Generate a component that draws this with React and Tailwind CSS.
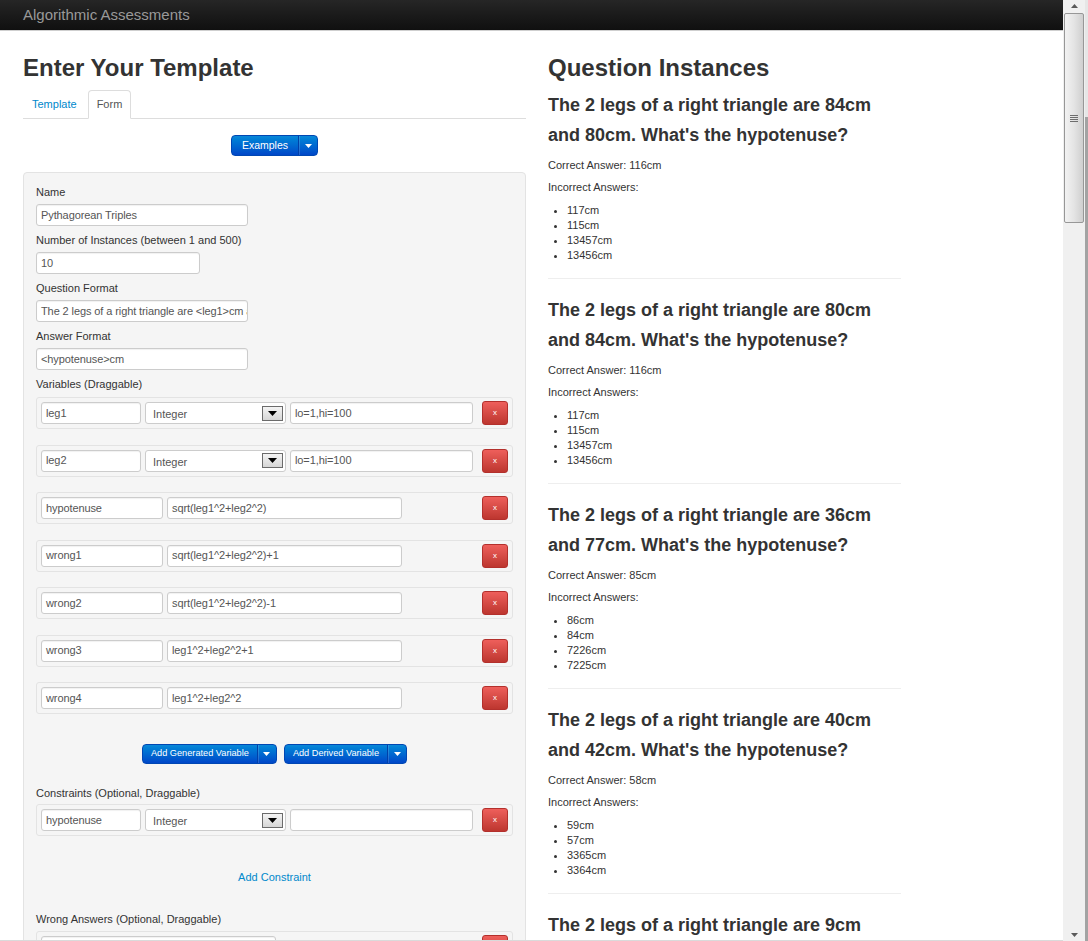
import React from "react";

const font = "font-['Liberation_Sans',Arial,sans-serif]";

const questions = [
  { legs: "84cm", other: "80cm", correct: "116cm", wrong: ["117cm", "115cm", "13457cm", "13456cm"] },
  { legs: "80cm", other: "84cm", correct: "116cm", wrong: ["117cm", "115cm", "13457cm", "13456cm"] },
  { legs: "36cm", other: "77cm", correct: "85cm", wrong: ["86cm", "84cm", "7226cm", "7225cm"] },
  { legs: "40cm", other: "42cm", correct: "58cm", wrong: ["59cm", "57cm", "3365cm", "3364cm"] },
  { legs: "9cm", other: "40cm", correct: "41cm", wrong: ["42cm", "40cm", "1682cm", "1681cm"] },
];

const Caret = () => (
  <svg width="7" height="4" viewBox="0 0 7 4">
    <path d="M0 0h7L3.5 4z" fill="#fff" />
  </svg>
);

const Input = ({ w, children }) => (
  <div
    className={`flex h-[22px] shrink-0 items-center overflow-hidden whitespace-nowrap rounded-[3px] border border-[#cccccc] bg-white pl-[4px] text-[11px] tracking-[-0.1px] text-[#555] shadow-[inset_0_1px_1px_rgba(0,0,0,0.06)] ${w}`}
  >
    {children}
  </div>
);

const Select = () => (
  <div className="flex h-[22px] w-[141px] shrink-0 items-center justify-between rounded-[3px] border border-[#cccccc] bg-white pl-[7px] pr-[2px] text-[11px] text-[#555]">
    <span className="pt-[3px]">Integer</span>
    <div className="flex h-[15px] w-[21px] items-center justify-center border border-[#6b6b6b] bg-linear-to-b from-[#f4f4f4] to-[#d6d6d6]">
      <svg width="9" height="5" viewBox="0 0 9 5">
        <path d="M0 0h9L4.5 5z" fill="#000" />
      </svg>
    </div>
  </div>
);

const RemoveBtn = () => (
  <div className="ml-auto mr-[4px] flex h-[24px] w-[26px] shrink-0 items-center justify-center rounded-[3px] border border-[#b3302c] bg-linear-to-b from-[#ee5f5b] to-[#bd362f] text-[8px] text-white">
    x
  </div>
);

const Row = ({ children }) => (
  <div className="flex h-[32px] items-center gap-[4px] rounded-[3px] border border-[#e3e3e3] bg-[#f5f5f5] pl-[4px]">
    {children}
  </div>
);

const BlueSplit = ({ label, text, px }) => (
  <div className={`flex items-stretch rounded-[4px] border border-[#0047b3] bg-linear-to-b from-[#0a88d8] to-[#0046c8] text-white ${text}`}>
    <div className={`flex items-center ${px}`}>{label}</div>
    <div className="flex w-[19px] items-center justify-center border-l border-[#0040a8] shadow-[inset_1px_0_0_rgba(255,255,255,0.15)]">
      <Caret />
    </div>
  </div>
);

const Field = ({ label, children }) => (
  <div className="mb-[7px]">
    <div className="mb-[4px] text-[11px] leading-[15px]">{label}</div>
    {children}
  </div>
);

const generated = [
  ["leg1", "lo=1,hi=100"],
  ["leg2", "lo=1,hi=100"],
];

const derived = [
  ["hypotenuse", "sqrt(leg1^2+leg2^2)"],
  ["wrong1", "sqrt(leg1^2+leg2^2)+1"],
  ["wrong2", "sqrt(leg1^2+leg2^2)-1"],
  ["wrong3", "leg1^2+leg2^2+1"],
  ["wrong4", "leg1^2+leg2^2"],
];

function TemplateForm() {
  return (
    <div className="w-[503px] shrink-0">
      <h2 className="mt-[22px] text-[24px] font-bold leading-[30px]">Enter Your Template</h2>

      <div className="mt-[7px] flex border-b border-[#dddddd] text-[11px]">
        <div className="mr-[2px] flex h-[28px] items-center px-[9px] text-[#0088cc]">Template</div>
        <div className="-mb-px flex h-[29px] items-center rounded-t-[4px] border border-[#dddddd] border-b-white bg-white px-[8px] text-[#555]">
          Form
        </div>
      </div>

      <div className="mt-[16px] flex justify-center">
        <div className="h-[21px] flex">
          <BlueSplit label="Examples" text="text-[10.5px]" px="px-[10px]" />
        </div>
      </div>

      <div className="mt-[16px] h-[900px] rounded-[4px] border border-[#e3e3e3] bg-[#f5f5f5] px-[12px] pt-[12px]">
        <Field label="Name">
          <Input w="w-[212px]">Pythagorean Triples</Input>
        </Field>
        <Field label="Number of Instances (between 1 and 500)">
          <Input w="w-[164px]">10</Input>
        </Field>
        <Field label="Question Format">
          <Input w="w-[212px]">The 2 legs of a right triangle are &lt;leg1&gt;cm and &lt;leg2&gt;cm. What's the hypotenuse?</Input>
        </Field>
        <Field label="Answer Format">
          <Input w="w-[212px]">&lt;hypotenuse&gt;cm</Input>
        </Field>

        <div className="text-[11px] leading-[15px]">Variables (Draggable)</div>
        <div className="mt-[5px] flex flex-col gap-[15.5px]">
          {generated.map(([n, p]) => (
            <Row key={n}>
              <Input w="w-[100px]">{n}</Input>
              <Select />
              <Input w="w-[183px]">{p}</Input>
              <RemoveBtn />
            </Row>
          ))}
          {derived.map(([n, e]) => (
            <Row key={n}>
              <Input w="w-[122px]">{n}</Input>
              <Input w="w-[235px]">{e}</Input>
              <RemoveBtn />
            </Row>
          ))}
        </div>

        <div className="mt-[30px] flex h-[20px] justify-center gap-[7px]">
          <BlueSplit label="Add Generated Variable" text="text-[9.2px]" px="px-[8px]" />
          <BlueSplit label="Add Derived Variable" text="text-[9.2px]" px="px-[8px]" />
        </div>

        <div className="mt-[22px] text-[11px] leading-[15px]">Constraints (Optional, Draggable)</div>
        <div className="mt-[3px]">
          <Row>
            <Input w="w-[100px]">hypotenuse</Input>
            <Select />
            <Input w="w-[183px]"></Input>
            <RemoveBtn />
          </Row>
        </div>

        <div className="mt-[34px] text-center text-[11px] leading-[15px] text-[#0088cc]">Add Constraint</div>

        <div className="mt-[27px] text-[11px] leading-[15px]">Wrong Answers (Optional, Draggable)</div>
        <div className="mt-[4px]">
          <Row>
            <Input w="w-[235px]"></Input>
            <RemoveBtn />
          </Row>
        </div>
      </div>
    </div>
  );
}

function Instances() {
  return (
    <div className="w-[353px] shrink-0">
      <h2 className="mt-[22px] text-[24px] font-bold leading-[30px]">Question Instances</h2>
      <div className="mt-[7px]">
        {questions.map((q, i) => (
          <div key={i} className={i > 0 ? "mt-[16px]" : ""}>
            <h3 className="max-w-[340px] text-[18px] font-bold leading-[30px]">
              The 2 legs of a right triangle are {q.legs} and {q.other}. What's the hypotenuse?
            </h3>
            <p className="mt-[8px] text-[11px] leading-[15px]">Correct Answer: {q.correct}</p>
            <p className="mt-[7px] text-[11px] leading-[15px]">Incorrect Answers:</p>
            <ul className="mt-[8px] list-disc pl-[19px] text-[11px] leading-[15px]">
              {q.wrong.map((w) => (
                <li key={w}>{w}</li>
              ))}
            </ul>
            <div className="mt-[15px] h-px bg-[#eeeeee]" />
          </div>
        ))}
      </div>
    </div>
  );
}

function Scrollbar() {
  return (
    <div className="flex h-full w-[25px] shrink-0">
      <div className="flex w-[22px] flex-col bg-[#f0f0f0]">
        <div className="flex h-[12px] items-center justify-center">
          <svg width="7" height="4" viewBox="0 0 7 4">
            <path d="M0 4L3.5 0L7 4z" fill="#5a5a5a" />
          </svg>
        </div>
        <div className="mx-[1px] mt-[1px] flex h-[210px] items-center justify-center rounded-[2px] border border-[#979797] bg-linear-to-r from-[#f2f2f2] via-[#e4e4e4] to-[#cfcfcf]">
          <div className="flex flex-col gap-[1px]">
            <div className="h-px w-[8px] bg-[#6d6d6d]" />
            <div className="h-px w-[8px] bg-[#6d6d6d]" />
            <div className="h-px w-[8px] bg-[#6d6d6d]" />
            <div className="h-px w-[8px] bg-[#6d6d6d]" />
          </div>
        </div>
        <div className="flex-1" />
        <div className="flex h-[12px] items-center justify-center">
          <svg width="7" height="4" viewBox="0 0 7 4">
            <path d="M0 0h7L3.5 4z" fill="#5a5a5a" />
          </svg>
        </div>
      </div>
      <div className="flex w-[3px] flex-col">
        <div className="h-[117px] bg-[#e6e6e6]" />
        <div className="flex-1 bg-[#a3a3a3]" />
      </div>
    </div>
  );
}

export default function App() {
  return (
    <div className={`flex h-[941px] w-[1088px] overflow-hidden bg-white text-[#333333] ${font}`}>
      <div className="flex min-w-0 flex-1 flex-col">
        <div className="flex h-[31px] shrink-0 items-center border-b border-[#cfcfcf] bg-linear-to-b from-[#262626] to-[#101010] pl-[23px] text-[15px] text-[#999999]">
          Algorithmic Assessments
        </div>
        <div className="flex min-h-0 flex-1 gap-[22px] overflow-hidden border-b border-[#dadada] pl-[23px]">
          <TemplateForm />
          <Instances />
        </div>
      </div>
      <Scrollbar />
    </div>
  );
}
